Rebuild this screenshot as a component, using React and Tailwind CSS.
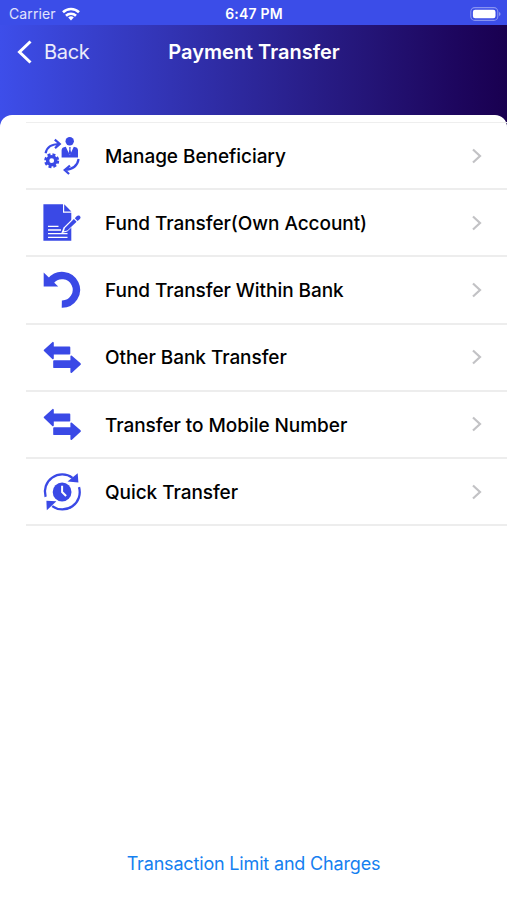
function ManageIcon() {
  return (
    <svg viewBox="0 0 40 40" className="size-10" fill="none" stroke="#3a49e6" strokeWidth="2.2">
      <path d="M3.6 17.3C4.6 11.8 9 8 17.6 8M12.8 3.7l5 4.3-4.8 4.2" />
      <path d="M36.6 23c-1 6.5-5.5 10.3-13.8 11M28 29.6L22.7 34l4.4 4" />
      <circle cx="27.7" cy="5.3" r="4.2" fill="#3a49e6" stroke="none" />
      <path d="M19.6 21.6v-7.3c0-2.2 1.4-3.3 4.2-3.6l4 8.6 4-8.6c2.8.3 4.2 1.4 4.2 3.6v7.3z" fill="#3a49e6" stroke="none" />
      <path d="M26.9 11.3h2l-.5 1.6.8 4.3-1.3 2-1.3-2 .8-4.3z" fill="#3a49e6" stroke="none" />
      <circle cx="9.7" cy="24.7" r="4.1" strokeWidth="3.4" />
      <circle cx="9.7" cy="24.7" r="6.2" strokeWidth="2.6" strokeDasharray="2.9 1.97" />
    </svg>
  );
}

function DocumentIcon() {
  return (
    <svg viewBox="0 0 40 40" className="size-10">
      <path d="M1.4 1.3H21v8.4h8.3v28H1.4z" fill="#3a49e6" />
      <path d="M22.2 1.3v7.2h7.2z" fill="#3a49e6" />
      <path d="M6 23.3h10.5M6 27h13M6 30.7h19.5M6 34.3h19.5" stroke="#fff" strokeWidth="1.3" />
      <path d="M19.3 30.3l2.3-5.8L32 14.2l4 4-10.7 10.4z" fill="#fff" />
      <path d="M22 28.2l.9-3.2 9-9 2.7 2.7-9.2 8.9z" fill="#3a49e6" />
      <path d="M32.8 15.2l2.1-2.1c2-1.9 4.9.9 3 2.8l-2.3 2.2z" fill="#3a49e6" />
    </svg>
  );
}

function UndoIcon() {
  return (
    <svg viewBox="0 0 40 40" className="size-10">
      <path d="M8.8 11A14.3 14.3 0 1 1 19.8 34.1" fill="none" stroke="#3a49e6" strokeWidth="7.4" />
      <path d="M1.7 2.5L16.2 16.5H1.7z" fill="#3a49e6" />
    </svg>
  );
}

function SwapIcon() {
  return (
    <svg viewBox="0 0 40 40" className="size-10" fill="#3a49e6" stroke="#3a49e6" strokeWidth="1.8" strokeLinejoin="round">
      <path d="M2.6 13.3l8.3-7.5v4.7h16.5v6.1H10.9v4.7z" />
      <path d="M38 27l-8.7-7.6v4.7H12.1v6.1h17.2v4.9z" />
    </svg>
  );
}

function QuickIcon() {
  return (
    <svg viewBox="0 0 40 40" className="size-10">
      <g fill="none" stroke="#3a49e6" strokeWidth="2.3">
        <path d="M3.6 24.8A17.3 17.3 0 0 1 30.5 5.9" />
        <path d="M37 15.2A17.3 17.3 0 0 1 10.2 34.1" />
      </g>
      <path d="M35.7 1.2l.7 9.3-10.8-.9z" fill="#3a49e6" />
      <path d="M4.4 28.7l10 .6L4.8 38.3z" fill="#3a49e6" />
      <circle cx="20.1" cy="20" r="9.4" fill="#3a49e6" />
      <path d="M20.1 13.8V20l4 4" fill="none" stroke="#fff" strokeWidth="2" />
    </svg>
  );
}

const items = [
  { label: 'Manage Beneficiary', Icon: ManageIcon },
  { label: 'Fund Transfer(Own Account)', Icon: DocumentIcon },
  { label: 'Fund Transfer Within Bank', Icon: UndoIcon },
  { label: 'Other Bank Transfer', Icon: SwapIcon },
  { label: 'Transfer to Mobile Number', Icon: SwapIcon },
  { label: 'Quick Transfer', Icon: QuickIcon },
];

function StatusBar() {
  return (
    <div className="grid h-[25px] grid-cols-3 items-center bg-[#3b4de8] pt-[2px] text-[14px] text-white">
      <div className="flex items-center gap-[6px] pl-[9px]">
        <span className="tracking-[0.12px] text-white/85">Carrier</span>
        <svg viewBox="0 0 18 14" className="h-[14px] w-[18px]" fill="none" stroke="#fff" strokeWidth="2.6">
          <path d="M1 5.2a11.500 11.500 0 0 1 16 0M4 8.700a7.200 7.200 0 0 1 10 0" />
          <path d="M9 13.500l-2.800-2.900a4 4 0 0 1 5.600 0z" fill="#fff" stroke="none" />
        </svg>
      </div>
      <span className="pl-px text-center font-semibold tracking-[0.2px]">6:47 PM</span>
      <div className="flex justify-end pr-[6px]">
        <svg viewBox="0 0 31 14" className="h-[14px] w-[31px]">
          <rect x=".8" y=".6" width="27" height="12.8" rx="4" fill="none" stroke="#fff" strokeOpacity=".4" strokeWidth="1.1" />
          <rect x="2.9" y="2.7" width="22.6" height="8.6" rx="2.2" fill="#fff" />
          <path d="M29.2 5v4c1.7-.8 1.7-3.2 0-4z" fill="#fff" fillOpacity=".5" />
        </svg>
      </div>
    </div>
  );
}

export default function App() {
  return (
    <div className="flex h-[900px] w-[507px] flex-col overflow-hidden bg-white font-['Inter','Liberation_Sans',sans-serif]">
      <StatusBar />
      <div className="bg-linear-to-r from-[#3d4eea] to-[#190050]">
        <header className="grid h-[90px] grid-cols-[1fr_auto_1fr] items-start pt-[12px] text-white">
          <button className="flex h-[30px] items-center gap-[12px] pl-[17px] text-[20px] tracking-[-0.3px] text-white/90">
            <svg viewBox="0 0 15 24" className="h-[24px] w-[15px]" fill="none" stroke="#fff" strokeWidth="3">
              <path d="M13.5 1.5L2.5 12l11 10.5" />
            </svg>
            <span>Back</span>
          </button>
          <h1 className="pl-px text-[20px] leading-[30px] font-semibold">Payment Transfer</h1>
        </header>
        <div className="h-[12px] rounded-t-[12px] bg-white pt-[7px] pl-[26px]">
          <div className="h-px bg-[#eeeeee]" />
        </div>
      </div>

      <main className="-mt-[4px] flex-1 pl-[26px]">
        <ul>
          {items.map(({ label, Icon }) => (
            <li key={label} className="flex h-[67.2px] items-center border-b-2 border-[#ededed] pr-[24px] pl-[16px]">
              <Icon />
              <span className="flex-1 pt-[3px] pl-[23px] text-[19px] font-medium tracking-[-0.05px] text-black">{label}</span>
              <svg viewBox="0 0 12 16" className="h-[16px] w-[12px]" fill="none" stroke="#c2c2c5" strokeWidth="2.2">
                <path d="M2 1.5L9 8l-7 6.5" />
              </svg>
            </li>
          ))}
        </ul>
      </main>

      <footer className="flex justify-center pb-[22px]">
        <a href="#charges" className="text-[18px] leading-[28px] tracking-[-0.17px] text-[#1580f0]">Transaction Limit and Charges</a>
      </footer>
    </div>
  );
}
